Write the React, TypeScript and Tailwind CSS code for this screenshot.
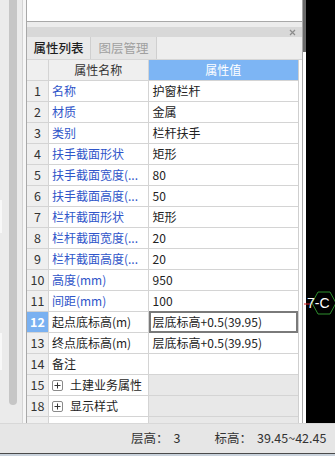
import React from "react";

type Row = { n: string; name: string; val: string; blue?: boolean; group?: boolean; sel?: boolean; editing?: boolean };

const rows: Row[] = [
  { n: "1", name: "名称", val: "护窗栏杆", blue: true },
  { n: "2", name: "材质", val: "金属", blue: true },
  { n: "3", name: "类别", val: "栏杆扶手", blue: true },
  { n: "4", name: "扶手截面形状", val: "矩形", blue: true },
  { n: "5", name: "扶手截面宽度(...", val: "80", blue: true },
  { n: "6", name: "扶手截面高度(...", val: "50", blue: true },
  { n: "7", name: "栏杆截面形状", val: "矩形", blue: true },
  { n: "8", name: "栏杆截面宽度(...", val: "20", blue: true },
  { n: "9", name: "栏杆截面高度(...", val: "20", blue: true },
  { n: "10", name: "高度(mm)", val: "950", blue: true },
  { n: "11", name: "间距(mm)", val: "100", blue: true },
  { n: "12", name: "起点底标高(m)", val: "层底标高+0.5(39.95)", sel: true, editing: true },
  { n: "13", name: "终点底标高(m)", val: "层底标高+0.5(39.95)" },
  { n: "14", name: "备注", val: "" },
  { n: "15", name: "土建业务属性", val: "", group: true },
  { n: "18", name: "显示样式", val: "", group: true },
];

function PlusBox() {
  return (
    <span className="w-[11px] h-[11px] border border-[#8a8a8a] rounded-[2px] bg-white flex items-center justify-center mr-[7px] shrink-0">
      <svg width="7" height="7" viewBox="0 0 7 7">
        <path d="M3.5 0.5V6.5M0.5 3.5H6.5" stroke="#333" strokeWidth="1" />
      </svg>
    </span>
  );
}

export default function App() {
  return (
    <div className="w-[335px] h-[456px] overflow-hidden flex flex-col bg-[#ececec] font-['Noto_Sans_CJK_SC','Microsoft_YaHei',sans-serif] text-[12px] leading-none text-[#222]">
      <div className="h-[423px] flex flex-row">
        {/* left strip */}
        <div className="w-[26px] h-full flex flex-row bg-[#ebebeb]">
          <div className="w-[9px] h-full flex flex-col">
            <div className="h-[200px]" />
            <div className="h-[33px] w-[2px] bg-[#f8f8f8]" />
            <div className="h-[100px]" />
            <div className="h-[37px] w-[2px] bg-[#f8f8f8]" />
          </div>
          <div className="w-[8px] h-[405px] bg-[#c6c6c6] rounded-b-[4px]" />
          <div className="w-[5px] h-full" />
          <div className="w-[1px] h-full bg-[#d4d4d4]" />
          <div className="w-[3px] h-full bg-[#f6f6f6]" />
        </div>

        {/* panel */}
        <div className="w-[277px] h-full flex flex-col border-x border-[#a8a8a8] bg-[#ececec]">
          <div className="h-[22px] bg-white border-b border-[#a8a8a8] shrink-0" />
          <div className="h-[5px] bg-[#ececec] shrink-0" />
          <div className="h-[10px] bg-[#d8d8d8] shrink-0 flex items-center justify-end pr-[6px]">
            <svg width="7" height="7" viewBox="0 0 7 7">
              <path d="M1 1L6 6M6 1L1 6" stroke="#8c8c8c" strokeWidth="1.2" />
            </svg>
          </div>
          <div className="h-[23px] shrink-0 flex flex-row bg-[#eeeeee] border-b border-[#d6d6d6]">
            <div className="w-[64px] h-full flex items-center justify-center bg-[#eaeaea] border-r border-[#cfcfcf] text-[12.5px] text-[#1e1e1e] font-medium">
              属性列表
            </div>
            <div className="w-[66px] h-full flex items-center justify-center bg-[#e5e5e5] border-r border-[#cfcfcf] text-[12.5px] text-[#a0a0a0]">
              图层管理
            </div>
          </div>

          <div className="flex-1 flex flex-row bg-white">
            <div className="w-[272px] flex flex-col border-r border-[#cfcfcf]">
              {/* header */}
              <div className="h-[21px] flex flex-row border-b border-[#d4d4d4] shrink-0">
                <div className="w-[22px] bg-[#efefef] border-r border-[#d4d4d4]" />
                <div className="w-[100px] bg-[#efefef] border-r border-[#d4d4d4] flex items-center justify-center text-[#333]">
                  属性名称
                </div>
                <div className="w-[150px] bg-[#7db5f4] flex items-center justify-center text-white">
                  属性值
                </div>
              </div>
              {rows.map((r) => (
                <div key={r.n} className="h-[21px] flex flex-row border-b border-[#d4d4d4] shrink-0">
                  <div
                    className={
                      r.sel
                        ? "w-[22px] bg-[#7ab1f1] border-r border-[#d4d4d4] flex items-center justify-center text-white font-bold text-[12.5px]"
                        : "w-[22px] bg-[#efefef] border-r border-[#d4d4d4] flex items-center justify-center text-[#333] text-[12.5px]"
                    }
                  >
                    {r.n}
                  </div>
                  <div
                    className={
                      r.blue
                        ? "w-[100px] bg-white border-r border-[#d4d4d4] flex items-center pl-[3px] text-[#2f55c9] whitespace-nowrap overflow-hidden"
                        : "w-[100px] bg-white border-r border-[#d4d4d4] flex items-center pl-[3px] text-[#1e1e1e] whitespace-nowrap overflow-hidden"
                    }
                  >
                    {r.group && <PlusBox />}
                    {r.name}
                  </div>
                  {r.editing ? (
                    <div className="w-[150px] bg-white flex items-center pl-[2px] border-2 border-[#7a7a7a] -mt-[1px] h-[22px] whitespace-nowrap">
                      {r.val}
                    </div>
                  ) : (
                    <div
                      className={
                        r.group
                          ? "w-[150px] bg-[#e8e8e8] flex items-center pl-[4px] whitespace-nowrap"
                          : "w-[150px] bg-white flex items-center pl-[4px] whitespace-nowrap"
                      }
                    >
                      {r.val}
                    </div>
                  )}
                </div>
              ))}
              <div className="flex-1 flex flex-row">
                <div className="w-[22px] bg-[#efefef] border-r border-[#d4d4d4]" />
                <div className="w-[100px] bg-white border-r border-[#d4d4d4]" />
                <div className="w-[150px] bg-[#e8e8e8]" />
              </div>
            </div>
            <div className="flex-1 bg-white" />
          </div>
        </div>

        {/* right strip */}
        <div className="w-[3px] h-full flex flex-col bg-white">
          <div className="h-[52px] bg-[#6a6a6a]" />
        </div>
        <div className="flex-1 h-full bg-black relative">
          <svg className="absolute left-[-2px] top-[289px] overflow-visible" width="32" height="28" viewBox="0 0 32 28">
            <path d="M0 15H6" stroke="#d22" strokeWidth="1" />
            <polygon points="8,14 14,3 26,3 32,14 26,25 14,25" fill="none" stroke="#2f8f2f" strokeWidth="1" />
            <text x="3" y="19" fill="#ffffff" fontSize="14" fontFamily="Liberation Sans, Arial, sans-serif">7-C</text>
          </svg>
        </div>
      </div>

      {/* status bar */}
      <div className="h-[30px] bg-[#e6e6e6] border-t border-[#d8d8d8] flex flex-row items-center text-[12.5px] text-[#333]">
        <span className="ml-[131px]">层高：</span>
        <span className="ml-[5px]">3</span>
        <span className="ml-[34px]">标高：</span>
        <span className="ml-[5px]">39.45~42.45</span>
      </div>
      <div className="h-[1px] bg-[#4a4a4a]" />
      <div className="h-[2px] bg-[#c9d2dc]" />
    </div>
  );
}
